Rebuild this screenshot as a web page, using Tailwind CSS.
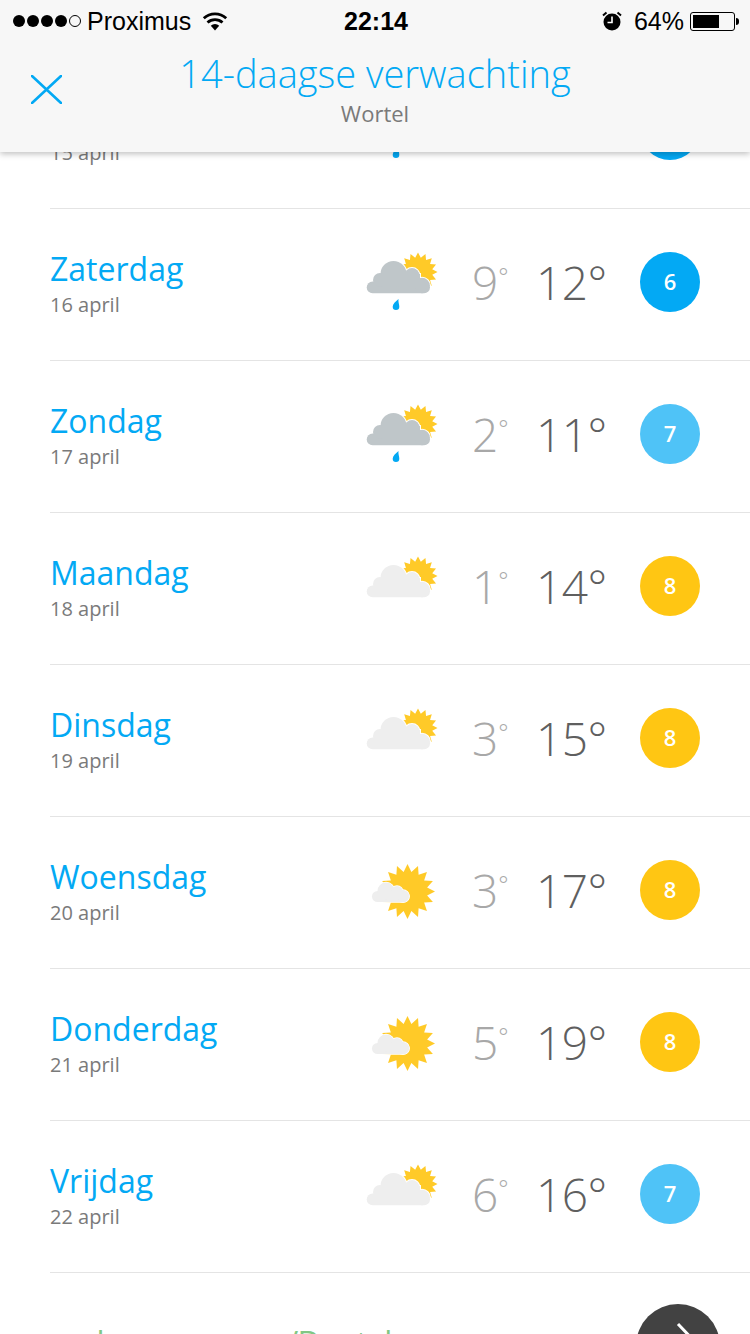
<!DOCTYPE html>
<html lang="en">
<head>
  <meta charset="UTF-8" />
  <title>14-daagse verwachting</title>
  <script src="https://cdn.jsdelivr.net/npm/@tailwindcss/browser@4"></script>
</head>
<body class="bg-white font-['Open_Sans',sans-serif]">

<svg width="0" height="0" class="absolute">
  <defs>
    <polygon id="sun-small" fill="#ffca28" points="" />
    <polygon id="sun-big" fill="#ffca28" points="" />
    <g id="cloud-shape">
      <rect x="6.7" y="30.5" width="63.3" height="11.8" rx="5.9" />
      <circle cx="33.5" cy="23" r="13" />
      <circle cx="20" cy="29" r="7" />
      <circle cx="52" cy="24.5" r="7.5" />
      <circle cx="62" cy="34.5" r="7.8" />
      <rect x="20" y="23" width="40" height="12" />
    </g>
    <g id="cloud-small-shape">
      <rect x="12" y="32" width="37" height="11" rx="5.5" />
      <circle cx="26" cy="32" r="8.5" />
      <circle cx="37" cy="33" r="6" />
      <circle cx="43" cy="37" r="6" />
      <rect x="20" y="32" width="22" height="8" />
    </g>
    <path id="drop" fill="#03a9f4" d="M38.5 48C38 51 39.3 53 39.3 55.7A3.3 3.3 0 0 1 32.7 55.7C32.7 53 35.5 50.5 38.5 48Z" />
    <symbol id="icon-rain" viewBox="0 0 80 60">
      <use href="#sun-small" />
      <use href="#cloud-shape" fill="#fff" stroke="#fff" stroke-width="2" />
      <use href="#cloud-shape" fill="#bfc6c9" />
      <use href="#drop" />
    </symbol>
    <symbol id="icon-cloudy" viewBox="0 0 80 60">
      <use href="#sun-small" />
      <use href="#cloud-shape" fill="#fff" stroke="#fff" stroke-width="2" />
      <use href="#cloud-shape" fill="#eeeeee" />
    </symbol>
    <symbol id="icon-sunny" viewBox="0 0 80 60">
      <use href="#sun-big" />
      <use href="#cloud-small-shape" fill="#fff" stroke="#fff" stroke-width="1.5" />
      <use href="#cloud-small-shape" fill="#eeeeee" />
    </symbol>
  </defs>
</svg>

<div class="relative h-[1334px] w-[750px] overflow-hidden">

  <!-- Header -->
  <div class="absolute top-0 left-0 z-10 h-[152px] w-full bg-[#f7f7f7] shadow-[0_2px_6px_rgba(0,0,0,0.25)]">
    <div class="flex h-10 translate-y-[1px] items-center justify-between pl-[13px] pr-[11px] text-[25px] leading-none text-black font-['Liberation_Sans',sans-serif]">
      <div class="flex w-[260px] items-center">
        <div class="flex items-center gap-[2px]">
          <span class="h-[12px] w-[12px] rounded-full bg-black"></span>
          <span class="h-[12px] w-[12px] rounded-full bg-black"></span>
          <span class="h-[12px] w-[12px] rounded-full bg-black"></span>
          <span class="h-[12px] w-[12px] rounded-full bg-black"></span>
          <span class="h-[12px] w-[12px] rounded-full border border-black"></span>
        </div>
        <span class="ml-[6px]">Proximus</span>
        <svg class="ml-[11px]" width="26" height="20" viewBox="0 0 26 20">
          <path d="M13 19.5 8.8 14.8a6 6 0 0 1 8.4 0Z" fill="#000" />
          <path d="M5.5 11.5a11 11 0 0 1 15 0M1.8 7.3a16.5 16.5 0 0 1 22.4 0" fill="none" stroke="#000" stroke-width="2.8" />
        </svg>
      </div>
      <span class="font-bold">22:14</span>
      <div class="flex w-[260px] items-center justify-end">
        <svg width="20" height="20" viewBox="0 0 20 20">
          <circle cx="10" cy="11" r="8.5" fill="#000" />
          <path d="M10 5.5V11.5H5.5" fill="none" stroke="#fff" stroke-width="1.6" />
          <path d="M1 4.5 4.5 1.5M19 4.5 15.5 1.5" stroke="#000" stroke-width="2" />
        </svg>
        <span class="ml-[12px]">64%</span>
        <div class="ml-[6px] flex items-center">
          <div class="h-[19px] w-[45px] rounded-[3px] border border-black p-[2px]">
            <div class="h-full w-[26px] bg-black"></div>
          </div>
          <div class="ml-[1px] h-[7px] w-[3px] rounded-r-sm bg-black"></div>
        </div>
      </div>
    </div>
    <svg class="absolute top-[75px] left-[31px]" width="31" height="29" viewBox="0 0 31 29">
      <path d="M1 1 30 28M30 1 1 28" fill="none" stroke="#03a9f4" stroke-width="2.6" stroke-linecap="round" />
    </svg>
    <div class="mt-[8px] text-center">
      <div class="text-[38px] leading-[50px] font-light text-[#03a9f4]">14-daagse verwachting</div>
      <div class="text-[22px] leading-[30px] text-[#7a7a7a]">Wortel</div>
    </div>
  </div>

  <!-- Days -->
  <div id="days" class="mt-[57px]"></div>

  <!-- Next block, cut off by the window -->
  <div class="relative ml-[50px] h-[80px]">
    <div class="absolute top-[48px] left-0 text-[32px] leading-[44px] tracking-[-0.6px] whitespace-nowrap text-[#81c784]">melanomenzorg/Doetal</div>
    <div class="absolute top-[31px] left-[586px] flex h-[84px] w-[84px] items-center justify-center rounded-full bg-[#424242]">
      <svg class="ml-[20px]" width="30" height="50" viewBox="0 0 30 50"><path d="M5 3 26 25 5 47" fill="none" stroke="#fff" stroke-width="3" /></svg>
    </div>
  </div>
</div>

<script>
const days = [
  ['Vrijdag', '15 april', 'icon-rain', 8, 11, 6, 'bg-[#03a9f4]'],
  ['Zaterdag', '16 april', 'icon-rain', 9, 12, 6, 'bg-[#03a9f4]'],
  ['Zondag', '17 april', 'icon-rain', 2, 11, 7, 'bg-[#4fc3f7]'],
  ['Maandag', '18 april', 'icon-cloudy', 1, 14, 8, 'bg-[#ffc613]'],
  ['Dinsdag', '19 april', 'icon-cloudy', 3, 15, 8, 'bg-[#ffc613]'],
  ['Woensdag', '20 april', 'icon-sunny', 3, 17, 8, 'bg-[#ffc613]'],
  ['Donderdag', '21 april', 'icon-sunny', 5, 19, 8, 'bg-[#ffc613]'],
  ['Vrijdag', '22 april', 'icon-cloudy', 6, 16, 7, 'bg-[#4fc3f7]']
];

function star(cx, cy, outer, inner, n) {
  const pts = [];
  for (let i = 0; i < n * 2; i++) {
    const r = i % 2 ? inner : outer;
    const a = Math.PI * i / n - Math.PI / 2;
    pts.push((cx + r * Math.cos(a)).toFixed(2) + ',' + (cy + r * Math.sin(a)).toFixed(2));
  }
  return pts.join(' ');
}
document.getElementById('sun-small').setAttribute('points', star(58, 21, 19.5, 14.5, 16));
document.getElementById('sun-big').setAttribute('points', star(47.5, 32.5, 27.5, 20, 16));

document.getElementById('days').innerHTML = days.map(d => `
  <div class="ml-[50px] flex h-[152px] items-center border-b-[1.5px] border-[#e4e4e4] pr-[50px]">
    <div class="w-[310px] -translate-y-[1px]">
      <div class="text-[32px] leading-[42px] text-[#03a9f4]">${d[0]}</div>
      <div class="text-[20px] leading-[30px] text-[#7a7a7a]">${d[1]}</div>
    </div>
    <svg class="h-[60px] w-[80px] -translate-y-[4px]"><use href="#${d[2]}" /></svg>
    <div class="ml-[32px] flex w-[64px] -translate-y-[3px] items-start text-[46px] leading-none font-light text-[#a8a8a8]">
      <span>${d[3]}</span><span class="text-[24px] leading-[34px]">°</span>
    </div>
    <div class="w-[104px] -translate-y-[3px] text-[46px] leading-none font-light tracking-[-0.5px] text-[#5f5f5f]">${d[4]}°</div>
    <div class="flex h-[60px] w-[60px] -translate-y-[3px] items-center justify-center rounded-full text-[22px] font-semibold text-white ${d[6]}">${d[5]}</div>
  </div>`).join('');
</script>

</body>
</html>
